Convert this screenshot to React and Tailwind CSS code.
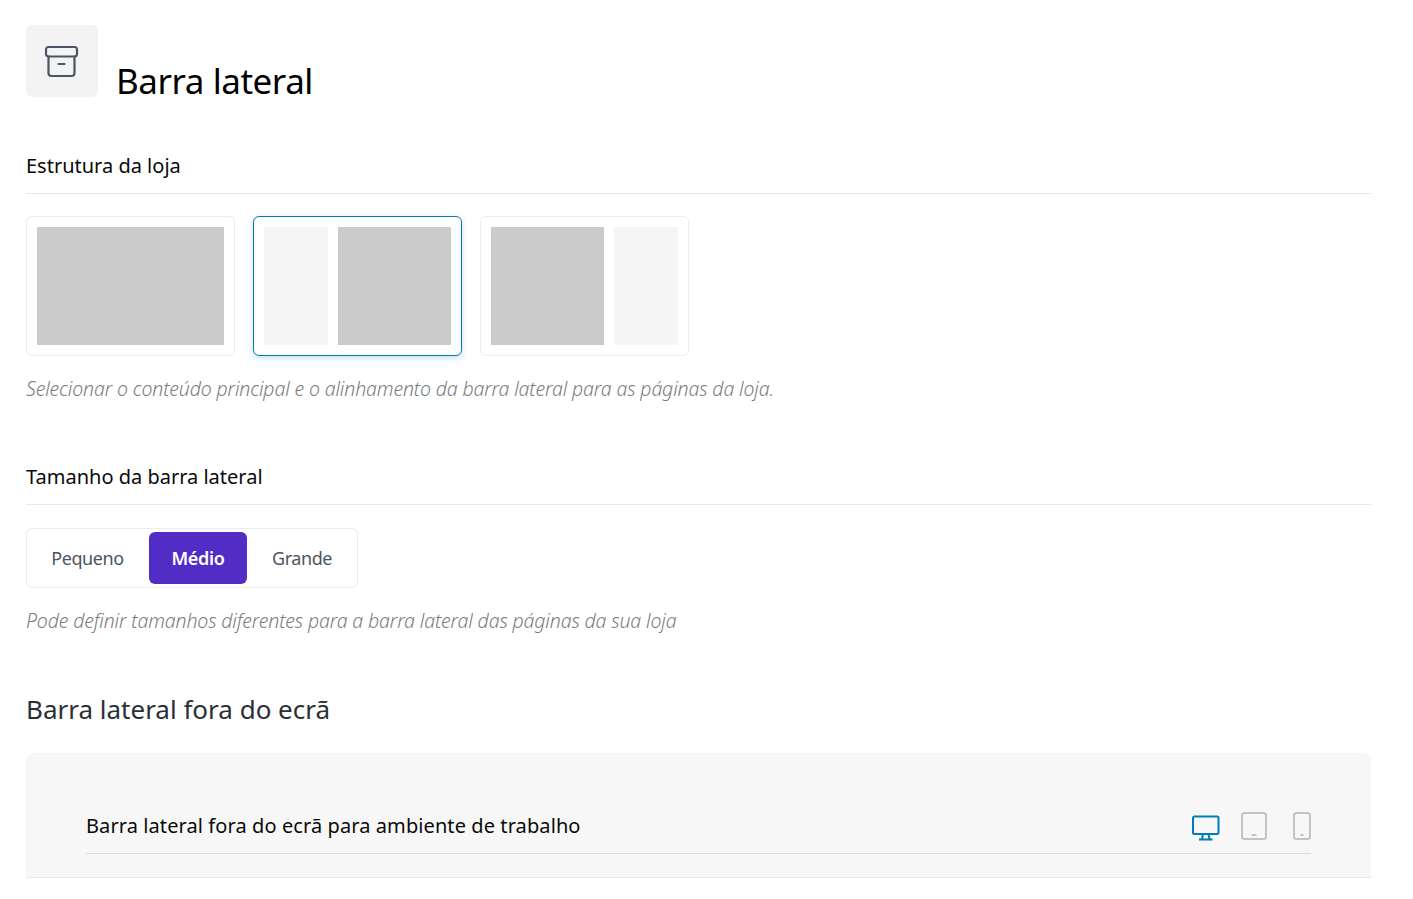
const font = "font-['Noto_Sans',sans-serif]";

function ArchiveIcon() {
  return (
    <svg width="36" height="36" viewBox="0 0 36 36" fill="none" stroke="#4b5563" strokeWidth="2.2" strokeLinecap="round" strokeLinejoin="round">
      <rect x="2" y="3" width="31" height="9.5" rx="2.5" />
      <path d="M4.5 12.5V29a3 3 0 0 0 3 3h20a3 3 0 0 0 3-3V12.5" />
      <path d="M14.500 20h6" />
    </svg>
  );
}

function LayoutCard({ selected, children }) {
  return (
    <div
      className={[
        "flex gap-[10px] w-[209px] h-[140px] p-[10px] bg-white border rounded-[6px]",
        selected
          ? "border-[#007cba] shadow-[0_2px_6px_rgba(0,124,186,0.25)]"
          : "border-[#ececec]",
      ].join(" ")}
    >
      {children}
    </div>
  );
}

function Main() {
  return <div className="flex-1 bg-[#cbcbcb]" />;
}

function Side() {
  return <div className="w-[64px] bg-[#f5f5f5]" />;
}

function SectionTitle({ children }) {
  return (
    <div className="h-[50px] flex items-center pb-[6px] border-b border-[#e8e8e8] text-[20px] text-[#0a0a0a]">
      {children}
    </div>
  );
}

function Help({ children }) {
  return <p className="italic font-light text-[19.5px] leading-[28px] text-[#7c7c7c] tracking-[-0.14px]">{children}</p>;
}

export default function App() {
  return (
    <div className={`${font} h-[899px] overflow-hidden bg-white pl-[26px] pr-[42px] pt-[25px]`}>
      <div className="flex items-end">
        <div className="w-[72px] h-[72px] rounded-[6px] bg-[#f3f3f3] flex items-center justify-center pt-[2px] pr-[1px]">
          <ArchiveIcon />
        </div>
        <h1 className="ml-[18px] text-[35px] leading-[50px] text-black tracking-[-0.45px] translate-y-[9px]">Barra lateral</h1>
      </div>

      <div className="mt-[47px]">
        <SectionTitle>Estrutura da loja</SectionTitle>
        <div className="flex gap-[18px] mt-[22px]">
          <LayoutCard>
            <Main />
          </LayoutCard>
          <LayoutCard selected>
            <Side />
            <Main />
          </LayoutCard>
          <LayoutCard>
            <Main />
            <Side />
          </LayoutCard>
        </div>
        <div className="mt-[19px]">
          <Help>Selecionar o conteúdo principal e o alinhamento da barra lateral para as páginas da loja.</Help>
        </div>
      </div>

      <div className="mt-[52px]">
        <SectionTitle>Tamanho da barra lateral</SectionTitle>
        <div className="mt-[23px] w-[332px] h-[60px] flex items-center p-[3px] border border-[#ececec] rounded-[6px] text-[18px] text-[#4b5563]">
          <span className="w-[119px] pr-[4px] text-center tracking-[-0.45px]">Pequeno</span>
          <span className="w-[98px] h-[52px] flex items-center justify-center rounded-[6px] bg-[#512cc5] text-white font-semibold tracking-[-0.3px]">Médio</span>
          <span className="flex-1 pl-[3px] text-center tracking-[-0.45px]">Grande</span>
        </div>
        <div className="mt-[19px]">
          <Help>Pode definir tamanhos diferentes para a barra lateral das páginas da sua loja</Help>
        </div>
      </div>

      <h2 className="mt-[56px] text-[26px] leading-[36px] text-[#2b2f36]">Barra lateral fora do ecrã</h2>

      <div className="mt-[26px] h-[125px] bg-[#f7f7f7] rounded-t-[8px] border-b border-[#e8e8e8] px-[60px] pt-[43px]">
        <div className="h-[58px] flex items-center justify-between border-b border-[#dcdcdc] pt-[2px]">
          <span className="text-[20px] text-[#0a0a0a] tracking-[0.09px]">Barra lateral fora do ecrã para ambiente de trabalho</span>
          <div className="flex items-center">
            <svg className="overflow-visible" width="28" height="28" viewBox="1 -3 28 28" fill="none" stroke="#007cba" strokeWidth="2">
              <rect x="1" y="1.5" width="25.5" height="17.5" rx="1.5" />
              <path d="M11 19l-1 5M16.500 19l1 5M7 24.500h13.500" />
            </svg>
            <svg className="ml-[20px]" width="26" height="28" viewBox="0 0 26 28" fill="none" stroke="#c4c4c4" strokeWidth="2">
              <rect x="1" y="1" width="24" height="26" rx="2.500" />
              <path d="M10.500 23h5" />
            </svg>
            <svg className="ml-[26px]" width="18" height="28" viewBox="0 0 18 28" fill="none" stroke="#c4c4c4" strokeWidth="2">
              <rect x="1" y="1" width="16" height="26" rx="2.500" />
              <path d="M7.500 23h3" />
            </svg>
          </div>
        </div>
      </div>
    </div>
  );
}
